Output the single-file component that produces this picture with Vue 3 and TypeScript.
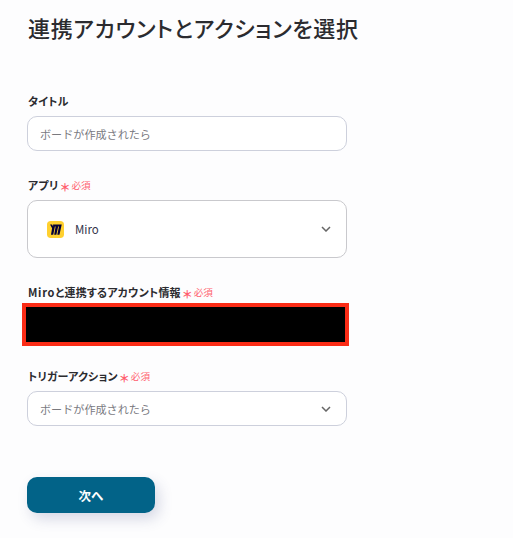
<script setup lang="ts">
const triggerText: string = 'ボードが作成されたら'
</script>

<template>
  <main class="page">
    <h1 class="title">連携アカウントとアクションを選択</h1>

    <section class="field first">
      <label class="label">タイトル</label>
      <div class="box short"><span class="value">{{ triggerText }}</span></div>
    </section>

    <section class="field app">
      <label class="label">アプリ<span class="req"><i>＊</i>必須</span></label>
      <div class="box tall">
        <svg class="logo" viewBox="0 0 18 18" width="17" height="17" aria-hidden="true">
          <rect width="18" height="18" rx="4" fill="#ffd02f" />
          <path d="M6.4 3.6H8.8L6.6 14.6H4.2L5.4 7.6L3.2 3.6H5.4L6.5 5.8Z M10 3.6H12.3L9.9 14.6H7.6L9 6.6L8.2 3.6Z M13.4 3.6H15.6L13.2 14.6H10.9L12.5 6.6L11.7 3.6Z" fill="#050038" />
        </svg>
        <span class="app-name">Miro</span>
        <svg class="chev" viewBox="0 0 10 6" width="10" height="6" aria-hidden="true"><path d="M1 1l4 4 4-4" fill="none" stroke="#666" stroke-width="1.5" /></svg>
      </div>
    </section>

    <section class="field account">
      <label class="label"><span class="latin">Miro</span>と連携するアカウント情報<span class="req"><i>＊</i>必須</span></label>
      <div class="redacted"></div>
    </section>

    <section class="field action">
      <label class="label">トリガーアクション<span class="req"><i>＊</i>必須</span></label>
      <div class="box short">
        <span class="value">{{ triggerText }}</span>
        <svg class="chev" viewBox="0 0 10 6" width="10" height="6" aria-hidden="true"><path d="M1 1l4 4 4-4" fill="none" stroke="#666" stroke-width="1.5" /></svg>
      </div>
    </section>

    <button class="next" type="button">次へ</button>
  </main>
</template>

<style>
html, body { margin: 0; background: #fdfdfe; }
</style>

<style scoped>
.page {
  box-sizing: border-box;
  width: 513px;
  height: 538px;
  padding: 11px 0 0 27px;
  overflow: hidden;
  font-family: "Noto Sans CJK JP", "Noto Sans", sans-serif;
  color: #2b2b2f;
}
.title {
  margin: 0 0 0 1px;
  font-size: 22px;
  line-height: 32px;
  font-weight: 500;
  white-space: nowrap;
  font-feature-settings: "palt";
  letter-spacing: 0.65px;
}
.field { display: flex; flex-direction: column; width: 320px; }
.first { margin-top: 50px; }
.app { margin-top: 26px; }
.account { margin-top: 26px; }
.action { margin-top: 22px; }
.label {
  margin-left: 1px;
  font-size: 11px;
  line-height: 16px;
  font-weight: 700;
  display: flex;
  align-items: center;
  white-space: nowrap;
  font-feature-settings: "palt";
  letter-spacing: 0.2px;
}
.latin { letter-spacing: 0.7px; }
.req {
  display: inline-flex;
  align-items: center;
  margin-left: 1px;
  color: #ff5f6e;
  font-size: 9.6px;
  font-weight: 400;
  font-feature-settings: normal;
  letter-spacing: 0;
}
.req i {
  font-style: normal;
  font-size: 11px;
  line-height: 16px;
  margin-right: 1px;
  position: relative;
  top: 2px;
  font-weight: 700;
}
.box {
  box-sizing: border-box;
  display: flex;
  align-items: center;
  width: 320px;
  margin-top: 7px;
  background: #fff;
  border: 1px solid #cdd0dc;
  border-radius: 10px;
  padding: 0 15px 0 12px;
}
.short { height: 35px; }
.tall { height: 58px; padding-left: 19px; border-color: #c9c9cd; }
.value { font-size: 11.1px; color: #7a7a7f; }
.logo { flex: none; }
.app-name { margin-left: 11px; font-size: 11.5px; color: #34344a; }
.chev { margin-left: auto; flex: none; }
.redacted {
  box-sizing: border-box;
  width: 327px;
  height: 43px;
  margin: 3px 0 0 -5px;
  background: #000;
  border: 4px solid #fb2c16;
}
.next {
  display: block;
  width: 128px;
  height: 36px;
  margin-top: 51px;
  border: 0;
  border-radius: 10px;
  background: #026388;
  color: #fff;
  font-family: inherit;
  font-size: 12.5px;
  font-weight: 700;
  box-shadow: 4px 6px 14px rgba(60, 70, 130, 0.2);
}
</style>
